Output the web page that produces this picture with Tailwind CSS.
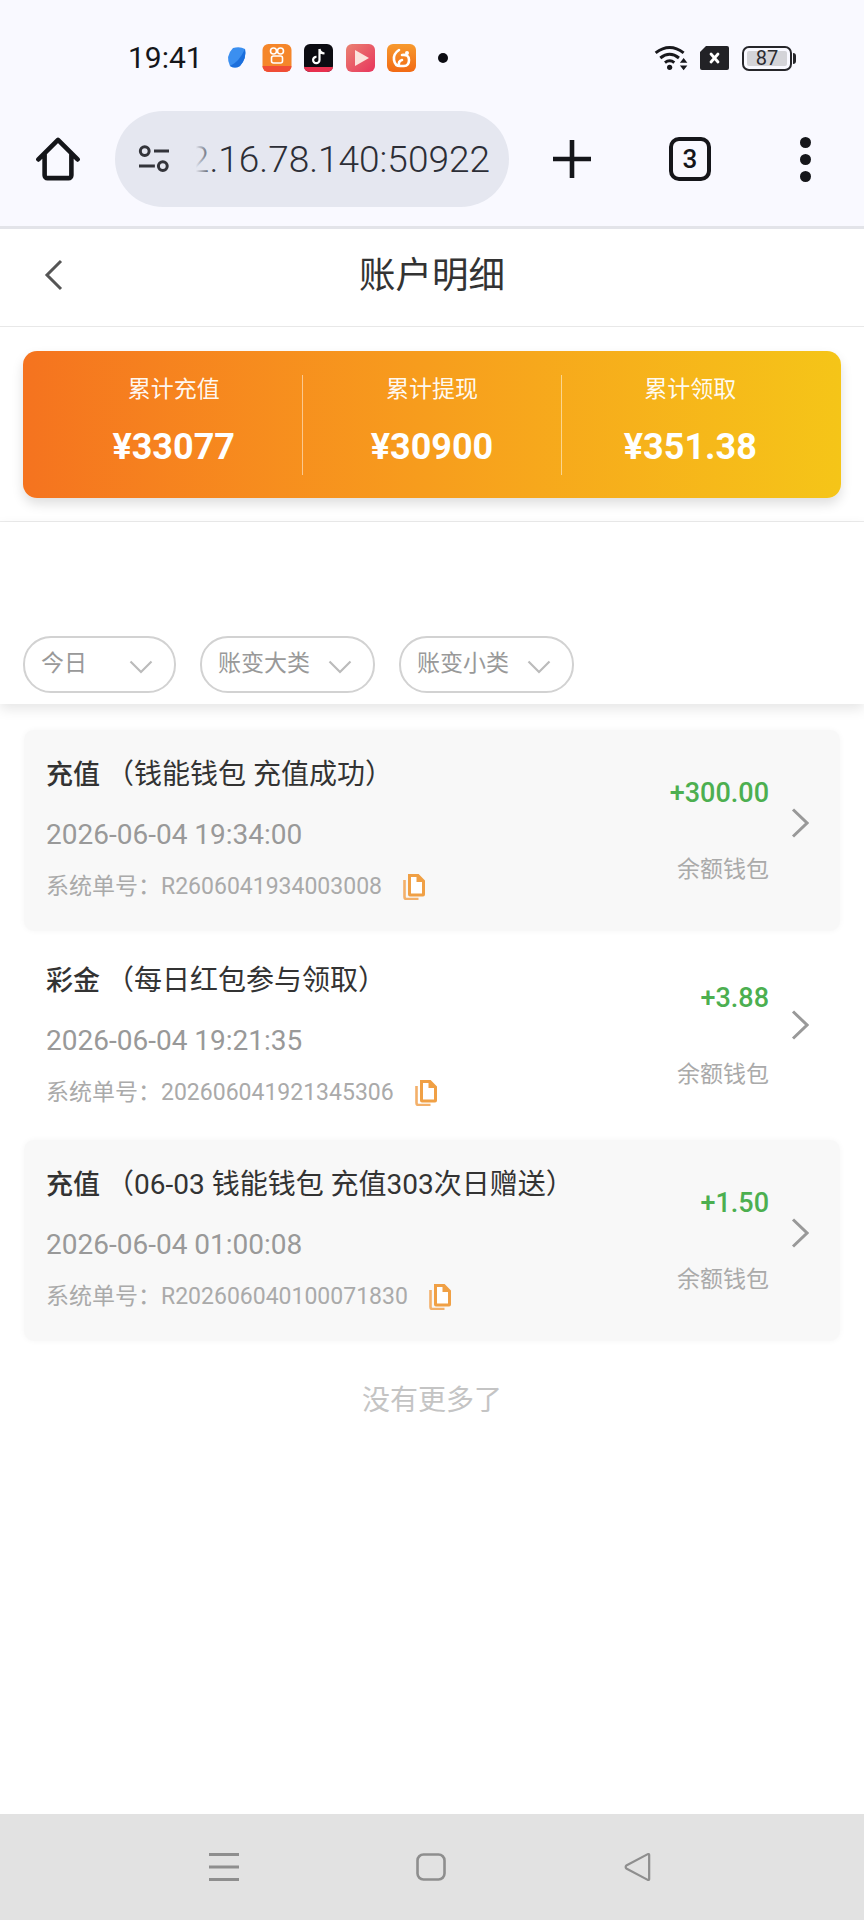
<!DOCTYPE html>
<html lang="zh-CN">
<head>
  <meta charset="UTF-8" />
  <meta name="viewport" content="width=device-width, initial-scale=1.0" />
  <title>账户明细</title>
  <script src="https://cdn.jsdelivr.net/npm/@tailwindcss/browser@4"></script>
</head>
<body class="bg-white font-['Roboto','Noto_Sans_CJK_SC',sans-serif]">
<div class="w-[864px] h-[1920px] flex flex-col overflow-hidden">

  <!-- browser chrome -->
  <div class="h-[229px] shrink-0 bg-[#f9f9ff] border-b-[3px] border-[#e3e4e9] flex flex-col">
    <div class="h-[111px] shrink-0 flex items-start pt-[41px] pl-[128px] pr-[68px]">
      <span class="text-[30px] leading-[34px] text-[#15161a] w-[76px]">19:41</span>
      <div class="flex items-center h-[34px] ml-[21px]">
        <svg width="22" height="24" viewBox="0 0 22 24"><path d="M8 2 Q15 0 20 3 Q22 12 15 20 Q10 23 5 20 Q0 10 8 2Z" fill="#3b8ff0"/><path d="M20 3 Q22 12 15 20 Q10 23 5 20 Q14 16 20 3Z" fill="#1c6fdc"/></svg>
        <svg class="ml-[15px]" width="30" height="28" viewBox="0 0 29 28"><rect width="29" height="28" rx="6" fill="#f5862a"/><path d="M0 22h29v0a6 6 0 0 1-6 6H6a6 6 0 0 1-6-6Z" fill="#f04d36"/><circle cx="11" cy="7" r="3" fill="none" stroke="#fff" stroke-width="1.6"/><circle cx="18" cy="7" r="3" fill="none" stroke="#fff" stroke-width="1.6"/><rect x="9" y="12" width="11" height="7" rx="2" fill="none" stroke="#fff" stroke-width="1.6"/></svg>
        <svg class="ml-[12px]" width="29" height="28" viewBox="0 0 29 28"><rect width="29" height="28" rx="6" fill="#0c0c12"/><path d="M0 23h29a6 5 0 0 1-6 5H6a6 5 0 0 1-6-5Z" fill="#e8304f"/><path d="M15.500 5v11a3.200 3.200 0 1 1-3-3.200M15.500 5q.5 4 5 4.500" fill="none" stroke="#fff" stroke-width="2.200"/></svg>
        <svg class="ml-[13px]" width="29" height="28" viewBox="0 0 29 28"><defs><linearGradient id="pl" x1="0" y1="0" x2="1" y2="1"><stop offset="0" stop-color="#ea8272"/><stop offset="1" stop-color="#e8345c"/></linearGradient></defs><rect width="29" height="28" rx="6" fill="url(#pl)"/><path d="M9 6 L23 14 L9 22Z" fill="#fbe3dc"/></svg>
        <svg class="ml-[12px]" width="29" height="28" viewBox="0 0 29 28"><defs><linearGradient id="uc" x1="0" y1="0" x2="0" y2="1"><stop offset="0" stop-color="#f79a2e"/><stop offset="1" stop-color="#f26a14"/></linearGradient></defs><rect width="29" height="28" rx="6" fill="url(#uc)"/><path d="M12 6q-6 4-5 10t6 6M15 11q7-1 7 5t-5 6h-5q-1-5 3-6" fill="none" stroke="#fff" stroke-width="2.600" stroke-linecap="round"/><circle cx="20" cy="9" r="2" fill="#fff"/></svg>
        <span class="w-[10px] h-[10px] rounded-full bg-[#0c0c12] ml-[22px]"></span>
      </div>
      <div class="ml-auto flex items-center h-[34px]">
        <svg width="37" height="28" viewBox="0 0 36 30"><g fill="none" stroke="#18181c" stroke-width="3.200"><path d="M1 9.500Q16-2 31 9.500"/><path d="M6 15Q16 7 26 15"/><path d="M11 20Q16 16 21 20"/></g><circle cx="16" cy="25" r="2.800" fill="#18181c"/><path d="M27 20l4-5 4 5ZM27 23h8l-4 5Z" fill="#18181c"/></svg>
        <svg class="ml-[10px]" width="29" height="24" viewBox="0 0 29 24"><path d="M6 0H27a2 2 0 0 1 2 2V22a2 2 0 0 1-2 2H2a2 2 0 0 1-2-2V6Z" fill="#222226"/><path d="M11 8l7 8M18 8l-7 8" stroke="#fff" stroke-width="2.800" stroke-linecap="round"/></svg>
        <div class="ml-[13px] flex items-center">
          <div class="w-[50px] h-[25px] rounded-[7px] border-2 border-[#26262a] flex items-center justify-center p-[3px]">
            <div class="w-full h-full bg-[#d4d4d8] rounded-[2px] flex items-center justify-center text-[20px] leading-none text-[#2b2b30]">87</div>
          </div>
          <div class="w-[3px] h-[11px] bg-[#26262a] rounded-r-sm ml-[1px]"></div>
        </div>
      </div>
    </div>
    <div class="flex items-center h-[96px]">
      <svg class="ml-[36px] shrink-0" width="44" height="44" viewBox="0 0 46 46"><path d="M2.500 23.500 23 3l20.500 20.500M9 18v22a3 3 0 0 0 3 3h22a3 3 0 0 0 3-3V18" fill="none" stroke="#15161a" stroke-width="4.800" stroke-linejoin="round" stroke-linecap="round"/></svg>
      <div class="ml-[35px] w-[394px] h-[96px] rounded-[48px] bg-[#e5e7f0] flex items-center pl-[21px] pr-[19px] shrink-0">
        <svg width="36" height="30" viewBox="0 0 36 34" class="shrink-0"><g fill="none" stroke="#33343a" stroke-width="3.400"><circle cx="7.500" cy="8" r="5"/><circle cx="28" cy="25" r="5"/><path d="M18 8h17M1 25h18"/></g></svg>
        <div class="relative flex-1 flex justify-end text-[37px] font-light leading-none text-[#2c2e36] whitespace-nowrap">
          <span>2.16.78.140:50922</span>
          <div class="absolute left-[16px] top-0 w-[26px] h-full bg-gradient-to-r from-[#e5e7f0] from-30% to-[#e5e7f0]/0"></div>
        </div>
      </div>
      <svg class="ml-[43px] shrink-0" width="40" height="40" viewBox="0 0 40 40"><path d="M20 1v38M1 20h38" stroke="#15161a" stroke-width="4.600"/></svg>
      <div class="ml-[77px] w-[42px] h-[44px] shrink-0 rounded-[10px] border-[4.500px] border-[#15161a] flex items-center justify-center text-[26px] font-medium text-[#15161a]">3</div>
      <div class="ml-[89px] flex flex-col gap-[6px] shrink-0">
        <span class="w-[11px] h-[11px] rounded-full bg-[#15161a]"></span>
        <span class="w-[11px] h-[11px] rounded-full bg-[#15161a]"></span>
        <span class="w-[11px] h-[11px] rounded-full bg-[#15161a]"></span>
      </div>
    </div>
  </div>

  <!-- page header -->
  <div class="h-[98px] shrink-0 border-b border-[#e8e8e8] flex items-start pt-[29px] justify-center relative">
    <svg class="absolute left-[44px] top-[30px]" width="20" height="32" viewBox="0 0 20 32"><path d="M17 2 3 16l14 14" fill="none" stroke="#555" stroke-width="3"/></svg>
    <h1 class="text-[36.500px] font-normal leading-none text-[#333]">账户明细</h1>
  </div>

  <!-- totals -->
  <div class="h-[195px] shrink-0 border-b border-[#ececec] px-[23px] pt-[24px]">
    <div class="h-[147px] rounded-[14px] bg-gradient-to-r from-[#f5731f] to-[#f5c518] shadow-[0_6px_12px_rgba(0,0,0,0.13)] flex items-center px-[22px] text-white">
      <div class="flex-1 h-[100px] flex flex-col items-center border-r border-white/50">
        <span class="text-[23px] leading-[32px] mt-[-1px] text-white/95">累计充值</span>
        <span class="text-[36px] leading-[40px] font-bold mt-[21px]">¥33077</span>
      </div>
      <div class="flex-1 h-[100px] flex flex-col items-center border-r border-white/50">
        <span class="text-[23px] leading-[32px] mt-[-1px] text-white/95">累计提现</span>
        <span class="text-[36px] leading-[40px] font-bold mt-[21px]">¥30900</span>
      </div>
      <div class="flex-1 h-[100px] flex flex-col items-center">
        <span class="text-[23px] leading-[32px] mt-[-1px] text-white/95">累计领取</span>
        <span class="text-[36px] leading-[40px] font-bold mt-[21px]">¥351.38</span>
      </div>
    </div>
  </div>

  <!-- filters -->
  <div class="h-[182px] shrink-0 shadow-[0_5px_12px_rgba(0,0,0,0.1)] relative pt-[114px] pl-[23px] flex gap-[24px]">
    <div class="w-[153px] h-[57px] rounded-[28px] border-2 border-[#d2d2d2] flex items-center pl-[16px] text-[23px] text-[#999] relative">今日
      <svg class="absolute right-[21px] top-[22px]" width="24" height="14" viewBox="0 0 24 14"><path d="M1.500 1.500 12 12 22.500 1.500" fill="none" stroke="#bbb" stroke-width="2.200"/></svg>
    </div>
    <div class="w-[175px] h-[57px] rounded-[28px] border-2 border-[#d2d2d2] flex items-center pl-[16px] text-[23px] text-[#999] relative">账变大类
      <svg class="absolute right-[21px] top-[22px]" width="24" height="14" viewBox="0 0 24 14"><path d="M1.500 1.500 12 12 22.500 1.500" fill="none" stroke="#bbb" stroke-width="2.200"/></svg>
    </div>
    <div class="w-[175px] h-[57px] rounded-[28px] border-2 border-[#d2d2d2] flex items-center pl-[16px] text-[23px] text-[#999] relative">账变小类
      <svg class="absolute right-[21px] top-[22px]" width="24" height="14" viewBox="0 0 24 14"><path d="M1.500 1.500 12 12 22.500 1.500" fill="none" stroke="#bbb" stroke-width="2.200"/></svg>
    </div>
  </div>

  <!-- records -->
  <div class="flex-1 px-[24px] pt-[26px] flex flex-col gap-[5px]">
    <div class="h-[201px] rounded-[10px] bg-[#f8f8f8] shadow-[0_0_6px_rgba(0,0,0,0.04)] pl-[22px] pr-[31px] flex items-start">
      <div class="flex-1 flex flex-col pt-[29px]">
        <div class="text-[28px] leading-[32px] text-[#333]"><span class="font-medium text-[27px]">充值</span><span class="ml-[6px]">（钱能钱包 充值成功）</span></div>
        <div class="text-[28px] leading-[32px] text-[#999] mt-[28px]">2026-06-04 19:34:00</div>
        <div class="text-[23px] leading-[30px] text-[#aaa] mt-[21px] flex items-center">系统单号：R2606041934003008
          <svg class="ml-[21px]" width="22" height="26" viewBox="0 0 22 26"><path d="M1.500 6v17a2 2 0 0 0 2 2h12" fill="none" stroke="#f3b06a" stroke-width="2.600"/><path d="M6.500 1.500h8.500l5.500 5.500v13.500a.5.500 0 0 1-.5.5H7a.5.500 0 0 1-.5-.5Z" fill="#fff" stroke="#f0a045" stroke-width="3"/><path d="M13.500 0 22 8h-8.500Z" fill="#f0a045"/></svg>
        </div>
      </div>
      <div class="flex flex-col items-end pt-[47px]">
        <span class="text-[27px] leading-[32px] font-medium text-[#4caf50]">+300.00</span>
        <span class="text-[23px] leading-[30px] text-[#aaa] mt-[46px]">余额钱包</span>
      </div>
      <svg class="ml-[22px] mt-[78px] shrink-0" width="18" height="30" viewBox="0 0 18 30"><path d="M2 1.500 16 15 2 28.500" fill="none" stroke="#999" stroke-width="3"/></svg>
    </div>

    <div class="h-[199px] pl-[22px] pr-[31px] flex items-start">
      <div class="flex-1 flex flex-col pt-[29px]">
        <div class="text-[28px] leading-[32px] text-[#333]"><span class="font-medium text-[27px]">彩金</span><span class="ml-[6px]">（每日红包参与领取）</span></div>
        <div class="text-[28px] leading-[32px] text-[#999] mt-[28px]">2026-06-04 19:21:35</div>
        <div class="text-[23px] leading-[30px] text-[#aaa] mt-[21px] flex items-center">系统单号：202606041921345306
          <svg class="ml-[21px]" width="22" height="26" viewBox="0 0 22 26"><path d="M1.500 6v17a2 2 0 0 0 2 2h12" fill="none" stroke="#f3b06a" stroke-width="2.600"/><path d="M6.500 1.500h8.500l5.500 5.500v13.500a.5.500 0 0 1-.5.5H7a.5.500 0 0 1-.5-.5Z" fill="#fff" stroke="#f0a045" stroke-width="3"/><path d="M13.500 0 22 8h-8.500Z" fill="#f0a045"/></svg>
        </div>
      </div>
      <div class="flex flex-col items-end pt-[46px]">
        <span class="text-[27px] leading-[32px] font-medium text-[#4caf50]">+3.88</span>
        <span class="text-[23px] leading-[30px] text-[#aaa] mt-[46px]">余额钱包</span>
      </div>
      <svg class="ml-[22px] mt-[74px] shrink-0" width="18" height="30" viewBox="0 0 18 30"><path d="M2 1.500 16 15 2 28.500" fill="none" stroke="#999" stroke-width="3"/></svg>
    </div>

    <div class="h-[201px] rounded-[10px] bg-[#f8f8f8] shadow-[0_0_6px_rgba(0,0,0,0.04)] pl-[22px] pr-[31px] flex items-start">
      <div class="flex-1 flex flex-col pt-[29px]">
        <div class="text-[28px] leading-[32px] text-[#333]"><span class="font-medium text-[27px]">充值</span><span class="ml-[6px]">（06-03 钱能钱包 充值303次日赠送）</span></div>
        <div class="text-[28px] leading-[32px] text-[#999] mt-[28px]">2026-06-04 01:00:08</div>
        <div class="text-[23px] leading-[30px] text-[#aaa] mt-[21px] flex items-center">系统单号：R202606040100071830
          <svg class="ml-[21px]" width="22" height="26" viewBox="0 0 22 26"><path d="M1.500 6v17a2 2 0 0 0 2 2h12" fill="none" stroke="#f3b06a" stroke-width="2.600"/><path d="M6.500 1.500h8.500l5.500 5.500v13.500a.5.500 0 0 1-.5.5H7a.5.500 0 0 1-.5-.5Z" fill="#fff" stroke="#f0a045" stroke-width="3"/><path d="M13.500 0 22 8h-8.500Z" fill="#f0a045"/></svg>
        </div>
      </div>
      <div class="flex flex-col items-end pt-[47px]">
        <span class="text-[27px] leading-[32px] font-medium text-[#4caf50]">+1.50</span>
        <span class="text-[23px] leading-[30px] text-[#aaa] mt-[46px]">余额钱包</span>
      </div>
      <svg class="ml-[22px] mt-[78px] shrink-0" width="18" height="30" viewBox="0 0 18 30"><path d="M2 1.500 16 15 2 28.500" fill="none" stroke="#999" stroke-width="3"/></svg>
    </div>

    <div class="text-center text-[28px] leading-[40px] text-[#c4c4c4] mt-[35px]">没有更多了</div>
  </div>

  <!-- android nav -->
  <div class="h-[106px] shrink-0 bg-[#e2e2e2] flex items-start pt-[39px]">
    <svg class="ml-[209px]" width="30" height="28" viewBox="0 0 30 28"><path d="M0 1.500h30M0 14h30M0 26.500h30" stroke="#8e8e8e" stroke-width="3"/></svg>
    <svg class="ml-[177px]" width="30" height="28" viewBox="0 0 30 28"><rect x="1.500" y="1.500" width="27" height="25" rx="6" fill="none" stroke="#8e8e8e" stroke-width="2.600"/></svg>
    <svg class="ml-[177px]" width="29" height="28" viewBox="0 0 30 30"><path d="M27.500 2v26a1 1 0 0 1-1.500.8L3 16.500a2 2 0 0 1 0-3L26 1.200a1 1 0 0 1 1.500.8Z" fill="none" stroke="#8e8e8e" stroke-width="2.400" stroke-linejoin="round"/></svg>
  </div>
</div>
</body>
</html>
